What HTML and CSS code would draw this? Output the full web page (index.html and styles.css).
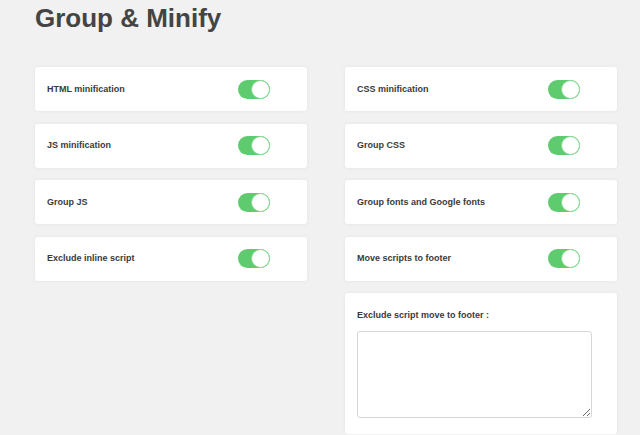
FILE: index.html
```html
<!DOCTYPE html>
<html>
<head>
<meta charset="utf-8">
<link rel="stylesheet" href="styles.css">
</head>
<body>
<div class="page">
  <h1 class="title">Group &amp; Minify</h1>
  <div class="columns">
    <div class="col">
      <div class="card row"><span class="label">HTML minification</span><span class="toggle"><span class="knob"></span></span></div>
      <div class="card row"><span class="label">JS minification</span><span class="toggle"><span class="knob"></span></span></div>
      <div class="card row"><span class="label">Group JS</span><span class="toggle"><span class="knob"></span></span></div>
      <div class="card row"><span class="label">Exclude inline script</span><span class="toggle"><span class="knob"></span></span></div>
    </div>
    <div class="col">
      <div class="card row"><span class="label">CSS minification</span><span class="toggle"><span class="knob"></span></span></div>
      <div class="card row"><span class="label">Group CSS</span><span class="toggle"><span class="knob"></span></span></div>
      <div class="card row"><span class="label">Group fonts and Google fonts</span><span class="toggle"><span class="knob"></span></span></div>
      <div class="card row"><span class="label">Move scripts to footer</span><span class="toggle"><span class="knob"></span></span></div>
      <div class="card block">
        <div class="label">Exclude script move to footer :</div>
        <textarea class="area"></textarea>
      </div>
    </div>
  </div>
</div>
</body>
</html>
```
FILE: styles.css
```css
html, body {
  margin: 0;
  padding: 0;
  background: #f1f1f1;
  font-family: "Liberation Sans", Arial, sans-serif;
  overflow: hidden;
}
.page {
  padding: 3px 0 0 35px;
}
.title {
  margin: 0;
  font-size: 26px;
  line-height: 30px;
  font-weight: bold;
  color: #444444;
}
.columns {
  display: flex;
  gap: 38px;
  margin-top: 34px;
}
.col {
  width: 272px;
  display: flex;
  flex-direction: column;
  gap: 12.6px;
}
.card {
  background: #ffffff;
  border-radius: 3px;
  box-shadow: 0 0 4px rgba(0, 0, 0, 0.06);
  box-sizing: border-box;
}
.row {
  height: 44px;
  display: grid;
  grid-template-columns: 191px 32px;
  align-items: center;
  padding-left: 12px;
}
.label {
  font-size: 9px;
  line-height: 11px;
  font-weight: bold;
  color: #3a3a3a;
}
.toggle {
  width: 32px;
  height: 19px;
  border-radius: 10px;
  background: #5ecb6f;
  display: flex;
  justify-content: flex-end;
  align-items: center;
  box-sizing: border-box;
}
.knob {
  width: 19px;
  height: 19px;
  border-radius: 50%;
  background: #ffffff;
  border: 1px solid #86d993;
  box-sizing: border-box;
}
.block {
  height: 140.7px;
  padding: 17px 12px 0 12px;
}
.block .label {
  margin-bottom: 10px;
}
.area {
  display: block;
  width: 235px;
  height: 87px;
  margin: 0;
  border: 1px solid #d7d7d7;
  border-radius: 3px;
  box-sizing: border-box;
  background: #ffffff;
}
```
